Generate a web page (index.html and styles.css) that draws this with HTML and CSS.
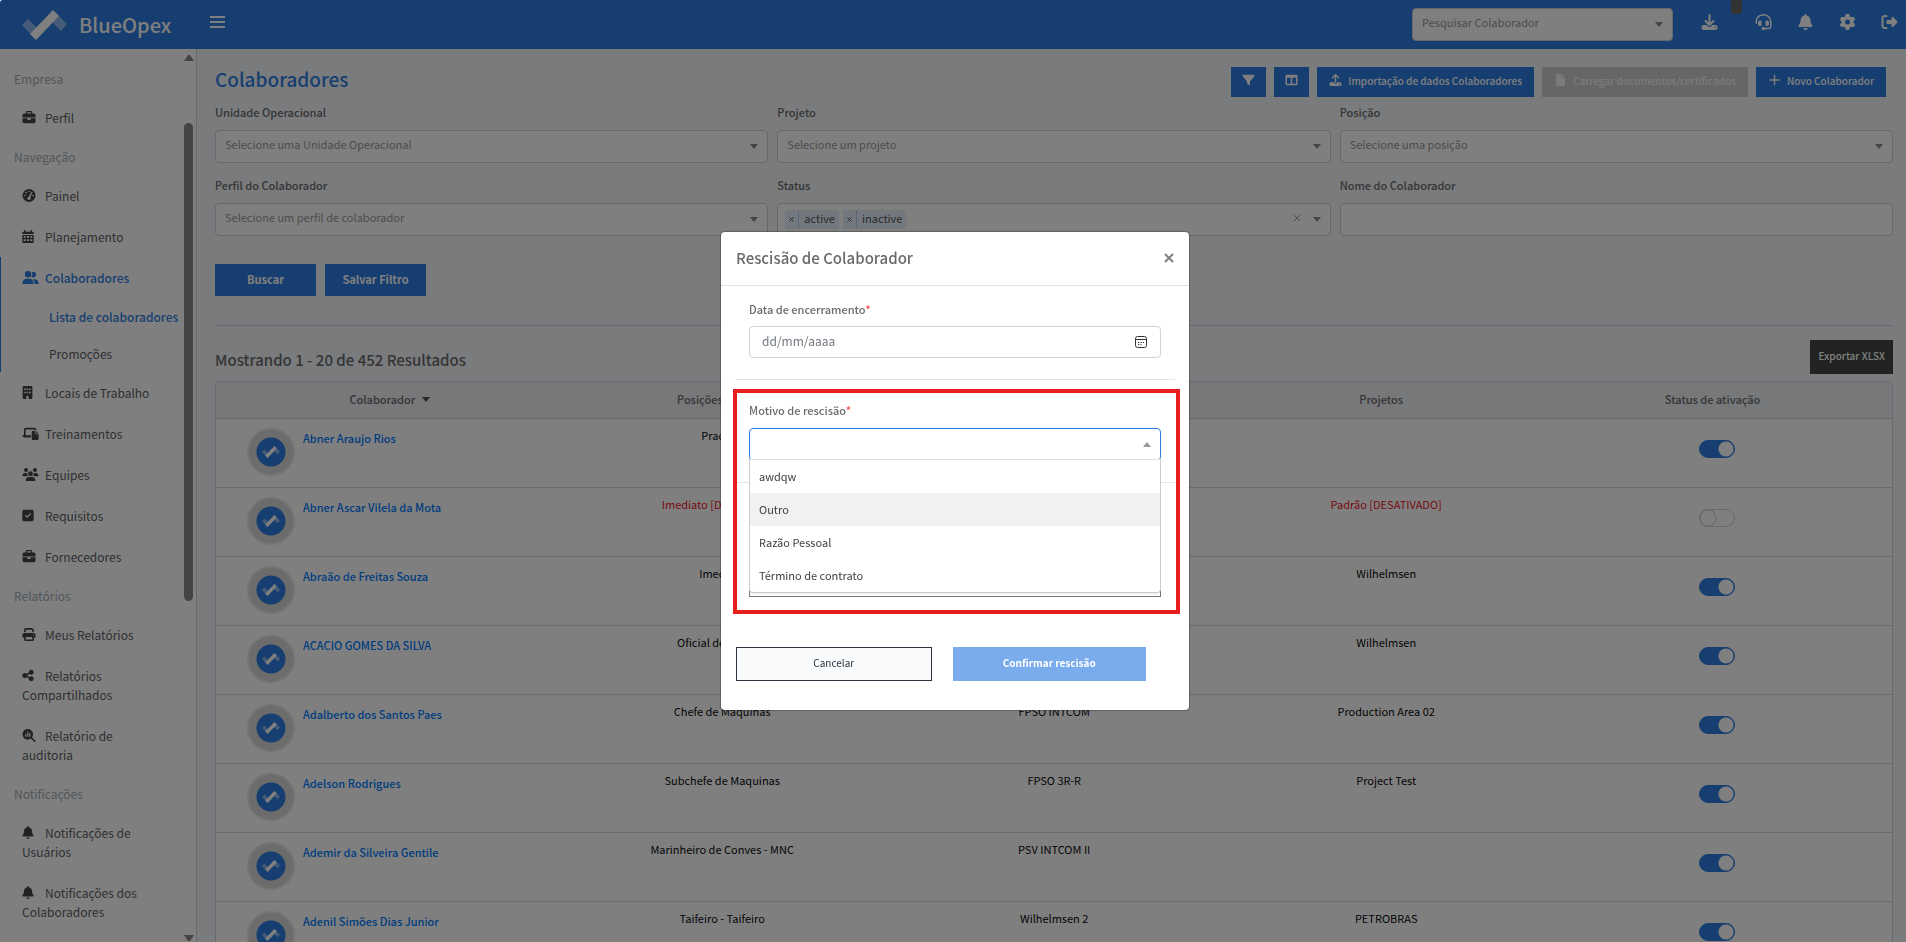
FILE: index.html
```html
<!DOCTYPE html>
<html lang="pt-BR">
<head>
    <meta charset="UTF-8">
    <meta name="viewport" content="width=device-width, initial-scale=1.0">
    <title>BlueOpex - Colaboradores</title>
    <link rel="stylesheet" href="styles.css">
</head>
<body>
    <svg class="sprite" aria-hidden="true">
        <symbol id="i-bell" viewBox="0 0 448 512"><path d="M224 0c-17.7 0-32 14.3-32 32V51.2C119 66 64 130.6 64 208v18.8c0 47-17.3 92.4-48.5 127.6l-7.4 8.3c-8.4 9.4-10.4 22.9-5.3 34.4S19.4 416 32 416H416c12.6 0 24-7.4 29.2-18.9s3.1-25-5.3-34.4l-7.4-8.3C401.3 319.2 384 273.9 384 226.8V208c0-77.4-55-142-128-156.8V32c0-17.7-14.3-32-32-32zm45.3 493.3c12-12 18.7-28.3 18.7-45.3H160c0 17 6.7 33.3 18.7 45.3s28.3 18.7 45.3 18.7s33.3-6.7 45.3-18.7z"/></symbol>
        <symbol id="i-share" viewBox="0 0 448 512"><path d="M352 224c53 0 96-43 96-96s-43-96-96-96s-96 43-96 96c0 4 .2 8 .7 11.9l-94.1 47C145.4 170.2 121.9 160 96 160c-53 0-96 43-96 96s43 96 96 96c25.9 0 49.4-10.2 66.6-26.9l94.1 47c-.5 3.9-.7 7.8-.7 11.9c0 53 43 96 96 96s96-43 96-96s-43-96-96-96c-25.9 0-49.4 10.2-66.6 26.9l-94.1-47c.5-3.9 .7-7.8 .7-11.9s-.2-8-.7-11.9l94.1-47C302.6 213.8 326.1 224 352 224z"/></symbol>
        <symbol id="i-briefcase" viewBox="0 0 512 512"><path d="M184 48H328c4.4 0 8 3.6 8 8V96H176V56c0-4.4 3.6-8 8-8zm-56 8V96H64C28.7 96 0 124.7 0 160v96H192 320 512V160c0-35.3-28.7-64-64-64H384V56c0-30.9-25.1-56-56-56H184c-30.9 0-56 25.1-56 56zM512 288H320v32c0 17.7-14.3 32-32 32H224c-17.7 0-32-14.3-32-32V288H0V416c0 35.3 28.7 64 64 64H448c35.3 0 64-28.7 64-64V288z"/></symbol>
        <symbol id="i-users" viewBox="0 0 640 512"><path d="M96 128a128 128 0 1 1 256 0A128 128 0 1 1 96 128zM0 482.3C0 383.8 79.8 304 178.3 304h91.4C368.2 304 448 383.8 448 482.3c0 16.4-13.3 29.7-29.7 29.7H29.7C13.3 512 0 498.7 0 482.3zM609.3 512H471.4c5.4-9.4 8.6-20.3 8.6-32v-8c0-60.7-27.1-115.2-69.8-151.8c2.4-.1 4.7-.2 7.1-.2h61.4C567.8 320 640 392.2 640 481.3c0 17-13.8 30.7-30.7 30.7zM432 256c-31 0-59-12.6-79.3-32.9C372.4 196.5 384 163.6 384 128c0-26.8-6.6-52.1-18.3-74.3C384.3 40.1 407.2 32 432 32c61.9 0 112 50.1 112 112s-50.1 112-112 112z"/></symbol>
        <symbol id="i-check" viewBox="0 0 448 512"><path d="M64 32C28.7 32 0 60.7 0 96V416c0 35.3 28.7 64 64 64H384c35.3 0 64-28.7 64-64V96c0-35.3-28.7-64-64-64H64zM337 209L209 337c-9.4 9.4-24.6 9.4-33.9 0l-64-64c-9.4-9.4-9.4-24.6 0-33.9s24.6-9.4 33.9 0l47 47L303 175c9.4-9.4 24.6-9.4 33.9 0s9.4 24.6 0 33.9z"/></symbol>
        <symbol id="i-print" viewBox="0 0 512 512"><path d="M128 0C92.7 0 64 28.7 64 64v96h64V64H354.7L384 93.3V160h64V93.3c0-17-6.7-33.3-18.7-45.3L400 18.7C388 6.7 371.7 0 354.7 0H128zM384 352v32 64H128V384 368 352H384zm64 32h32c17.7 0 32-14.3 32-32V256c0-35.3-28.7-64-64-64H64c-35.3 0-64 28.7-64 64v96c0 17.7 14.3 32 32 32H64v64c0 35.3 28.7 64 64 64H384c35.3 0 64-28.7 64-64V384zM432 248a24 24 0 1 1 0 48 24 24 0 1 1 0-48z"/></symbol>
        <symbol id="i-download" viewBox="0 0 512 512"><path d="M288 32c0-17.7-14.3-32-32-32s-32 14.3-32 32V274.7l-73.4-73.4c-12.5-12.5-32.8-12.5-45.3 0s-12.5 32.8 0 45.3l128 128c12.5 12.5 32.8 12.5 45.3 0l128-128c12.5-12.5 12.5-32.8 0-45.3s-32.8-12.5-45.3 0L288 274.7V32zM64 352c-35.3 0-64 28.7-64 64v32c0 35.3 28.7 64 64 64H448c35.3 0 64-28.7 64-64V416c0-35.3-28.7-64-64-64H346.5l-45.3 45.3c-25 25-65.5 25-90.5 0L165.5 352H64zm368 56a24 24 0 1 1 0 48 24 24 0 1 1 0-48z"/></symbol>
        <symbol id="i-upload" viewBox="0 0 512 512"><path d="M288 109.3V352c0 17.7-14.3 32-32 32s-32-14.3-32-32V109.3l-73.4 73.4c-12.5 12.5-32.8 12.5-45.3 0s-12.5-32.8 0-45.3l128-128c12.5-12.5 32.8-12.5 45.3 0l128 128c12.5 12.5 12.5 32.8 0 45.3s-32.8 12.5-45.3 0L288 109.3zM64 352H192c0 35.3 28.7 64 64 64s64-28.7 64-64H448c35.3 0 64 28.7 64 64v32c0 35.3-28.7 64-64 64H64c-35.3 0-64-28.7-64-64V416c0-35.3 28.7-64 64-64zM432 456a24 24 0 1 0 0-48 24 24 0 1 0 0 48z"/></symbol>
        <symbol id="i-gear" viewBox="0 0 512 512"><path d="M495.9 166.6c3.2 8.7 .5 18.4-6.4 24.6l-43.3 39.4c1.1 8.3 1.7 16.8 1.7 25.4s-.6 17.1-1.7 25.4l43.3 39.4c6.9 6.2 9.6 15.9 6.4 24.6c-4.4 11.9-9.7 23.3-15.8 34.3l-4.7 8.1c-6.6 11-14 21.4-22.1 31.2c-5.9 7.2-15.7 9.6-24.5 6.8l-55.7-17.7c-13.4 10.3-28.2 18.9-44 25.4l-12.5 57.1c-2 9.1-9 16.3-18.2 17.8c-13.8 2.3-28 3.5-42.5 3.5s-28.7-1.2-42.5-3.5c-9.2-1.5-16.2-8.7-18.2-17.8l-12.5-57.1c-15.8-6.5-30.6-15.1-44-25.4L83.1 425.9c-8.8 2.8-18.6 .3-24.5-6.8c-8.1-9.8-15.5-20.2-22.1-31.2l-4.7-8.1c-6.1-11-11.4-22.4-15.8-34.3c-3.2-8.7-.5-18.4 6.4-24.6l43.3-39.4C64.6 273.1 64 264.6 64 256s.6-17.1 1.7-25.4L22.4 191.2c-6.9-6.2-9.6-15.9-6.4-24.6c4.4-11.9 9.7-23.3 15.8-34.3l4.7-8.1c6.6-11 14-21.4 22.1-31.2c5.9-7.2 15.7-9.6 24.5-6.8l55.7 17.7c13.4-10.3 28.2-18.9 44-25.4l12.5-57.1c2-9.1 9-16.3 18.2-17.8C227.3 1.2 241.5 0 256 0s28.7 1.2 42.5 3.5c9.2 1.5 16.2 8.7 18.2 17.8l12.5 57.1c15.8 6.5 30.6 15.1 44 25.4l55.7-17.7c8.8-2.8 18.6-.3 24.5 6.8c8.1 9.8 15.5 20.2 22.1 31.2l4.7 8.1c6.1 11 11.4 22.4 15.8 34.3zM256 336a80 80 0 1 0 0-160 80 80 0 1 0 0 160z"/></symbol>
        <symbol id="i-headset" viewBox="0 0 512 512"><path d="M256 48C141.1 48 48 141.1 48 256v40c0 13.3-10.7 24-24 24s-24-10.7-24-24V256C0 114.6 114.6 0 256 0S512 114.6 512 256V400.1c0 48.6-39.4 88-88.1 88L313.6 488c-8.3 14.3-23.8 24-41.6 24H240c-26.5 0-48-21.5-48-48s21.5-48 48-48h32c17.8 0 33.3 9.7 41.6 24l110.4 .1c22.1 0 40-17.9 40-40V256c0-114.9-93.1-208-208-208zM144 208h16c17.7 0 32 14.3 32 32V352c0 17.7-14.3 32-32 32H144c-35.3 0-64-28.7-64-64V272c0-35.3 28.7-64 64-64zm224 0c35.3 0 64 28.7 64 64v48c0 35.3-28.7 64-64 64H352c-17.7 0-32-14.3-32-32V240c0-17.7 14.3-32 32-32h16z"/></symbol>
        <symbol id="i-logout" viewBox="0 0 512 512"><path d="M377.9 105.9L500.7 228.7c7.2 7.2 11.3 17.1 11.3 27.3s-4.1 20.1-11.3 27.3L377.9 406.1c-6.4 6.4-15 9.9-24 9.9c-18.7 0-33.9-15.2-33.9-33.9l0-62.1-128 0c-17.7 0-32-14.3-32-32l0-64c0-17.7 14.3-32 32-32l128 0 0-62.1c0-18.7 15.2-33.9 33.9-33.9c9 0 17.6 3.6 24 9.9zM160 96L96 96c-17.7 0-32 14.3-32 32l0 256c0 17.7 14.3 32 32 32l64 0c17.7 0 32 14.3 32 32s-14.3 32-32 32l-64 0c-53 0-96-43-96-96L0 128C0 75 43 32 96 32l64 0c17.7 0 32 14.3 32 32s-14.3 32-32 32z"/></symbol>
        <symbol id="i-filter" viewBox="0 0 512 512"><path d="M3.9 54.9C10.5 40.9 24.5 32 40 32H472c15.5 0 29.5 8.9 36.1 22.9s4.6 30.5-5.2 42.5L320 320.9V448c0 12.1-6.8 23.2-17.7 28.6s-23.8 4.3-33.5-3l-64-48c-8.1-6-12.8-15.5-12.8-25.6V320.9L9 97.3C-.7 85.4-2.8 68.8 3.9 54.9z"/></symbol>
        <symbol id="i-columns" viewBox="0 0 512 512"><path d="M0 96C0 60.7 28.7 32 64 32H448c35.3 0 64 28.7 64 64V416c0 35.3-28.7 64-64 64H64c-35.3 0-64-28.7-64-64V96zm64 64V416H224V160H64zm384 0H288V416H448V160z"/></symbol>
        <symbol id="i-file" viewBox="0 0 384 512"><path d="M0 64C0 28.7 28.7 0 64 0H224V128c0 17.7 14.3 32 32 32H384V448c0 35.3-28.7 64-64 64H64c-35.3 0-64-28.7-64-64V64zm384 64H256V0L384 128z"/></symbol>
        <symbol id="i-plus" viewBox="0 0 448 512"><path d="M224 64V448M32 256H416" fill="none" stroke="currentColor" stroke-width="60" stroke-linecap="round"/></symbol>
        <symbol id="i-building" viewBox="0 0 384 512"><path fill-rule="evenodd" d="M48 0H336a48 48 0 0 1 48 48V464a48 48 0 0 1-48 48H240V432a48 48 0 0 0-96 0v80H48a48 48 0 0 1-48-48V48A48 48 0 0 1 48 0zM64 96v64h64V96zm96 0v64h64V96zm96 0v64h64V96zM64 224v64h64V224zm96 0v64h64V224zm96 0v64h64V224z"/></symbol>
        <symbol id="i-calendar" viewBox="0 0 448 512"><path fill-rule="evenodd" d="M96 0a32 32 0 0 1 32 32V64H320V32a32 32 0 0 1 64 0V64h16a48 48 0 0 1 48 48v48H0V112A48 48 0 0 1 48 64H64V32A32 32 0 0 1 96 0zM0 192H448V464a48 48 0 0 1-48 48H48a48 48 0 0 1-48-48zM56 240v64h80V240zm128 0v64h80V240zm128 0v64h80V240zM56 368v64h80V368zm128 0v64h80V368zm128 0v64h80V368z"/></symbol>
        <symbol id="i-gauge" viewBox="0 0 512 512"><path fill-rule="evenodd" d="M0 256a256 256 0 1 1 512 0A256 256 0 1 1 0 256zM224 96a32 32 0 1 0 64 0a32 32 0 1 0-64 0zM112 144a32 32 0 1 0 64 0a32 32 0 1 0-64 0zM64 256a32 32 0 1 0 64 0a32 32 0 1 0-64 0zM384 256a32 32 0 1 0 64 0a32 32 0 1 0-64 0zM350 118L248 304a64 64 0 1 0 58 24L392 138a24 24 0 0 0-42-20z"/></symbol>
        <symbol id="i-laptop" viewBox="0 0 640 512"><path d="M128 32A64 64 0 0 0 64 96V320H16a16 16 0 0 0-16 16a80 80 0 0 0 80 80H336V320H128V96H480v32h64V96a64 64 0 0 0-64-64zM416 160a48 48 0 0 0-48 48V464a48 48 0 0 0 48 48H592a48 48 0 0 0 48-48V288H528a16 16 0 0 1-16-16V160zM544 160v96h96z"/></symbol>
        <symbol id="i-team" viewBox="0 0 640 512"><path d="M64 80a80 80 0 1 1 160 0A80 80 0 1 1 64 80zM416 80a80 80 0 1 1 160 0A80 80 0 1 1 416 80zM0 299c0-59 48-107 107-107h42c16 0 31 3 45 10a130 130 0 0 0 41 118H21a21 21 0 0 1-21-21zM405 320a130 130 0 0 0 41-118c14-7 29-10 45-10h42c59 0 107 48 107 107a21 21 0 0 1-21 21zM224 224a96 96 0 1 1 192 0A96 96 0 1 1 224 224zM128 485c0-73 60-133 133-133h118c73 0 133 60 133 133a27 27 0 0 1-27 27H155a27 27 0 0 1-27-27z"/></symbol>
        <symbol id="i-search-chart" viewBox="0 0 512 512"><path fill-rule="evenodd" d="M416 208c0 46-15 88-40 123l127 126a32 32 0 0 1-46 46L331 376A208 208 0 1 1 416 208zM104 216v72a24 24 0 0 0 48 0V216a24 24 0 0 0-48 0zM184 120V288a24 24 0 0 0 48 0V120a24 24 0 0 0-48 0zM264 184V288a24 24 0 0 0 48 0V184a24 24 0 0 0-48 0z"/></symbol>
        <symbol id="i-mark" viewBox="0 0 45 30"><path d="M0 15l6-6 13 13-6 7z" opacity=".45"/><path d="M31 0l14 14-6 7-13-13z" opacity=".45"/><path d="M8 24L31 0l6 6-23 24z"/></symbol>
        <symbol id="i-x" viewBox="0 0 10 10"><path d="M1 1l8 8M9 1l-8 8" fill="none" stroke="currentColor"/></symbol>
        <symbol id="i-date" viewBox="0 0 12 12"><path d="M2.500.5h7a2 2 0 0 1 2 2v7a2 2 0 0 1-2 2h-7a2 2 0 0 1-2-2v-7a2 2 0 0 1 2-2zM.5 3.500h11M3 6.500h1.200M5.400 6.500h1.200M7.800 6.500h1.200M3 8.700h1.200M5.400 8.700h1.200" fill="none" stroke="currentColor" stroke-width="1"/></symbol>
    </svg>

    <div class="app">
        <header class="topbar">
            <a class="brand" href="#"><svg class="brand-mark"><use href="#i-mark"/></svg>BlueOpex</a>
            <button class="menu-toggle" aria-label="Menu"><span></span><span></span><span></span></button>
            <select class="control top-search" aria-label="Pesquisar Colaborador"><option>Pesquisar Colaborador</option></select>
            <nav class="top-icons">
                <a href="#" class="has-badge" aria-label="Downloads"><svg><use href="#i-download"/></svg><span class="badge"></span></a>
                <a href="#" aria-label="Suporte"><svg><use href="#i-headset"/></svg></a>
                <a href="#" aria-label="Notificações"><svg><use href="#i-bell"/></svg></a>
                <a href="#" aria-label="Configurações"><svg><use href="#i-gear"/></svg></a>
                <a href="#" aria-label="Sair"><svg><use href="#i-logout"/></svg></a>
            </nav>
        </header>

        <div class="layout">
            <aside class="sidebar">
                <nav class="side-nav">
                    <h6>Empresa</h6>
                    <a href="#"><svg><use href="#i-briefcase"/></svg>Perfil</a>
                    <h6>Navegação</h6>
                    <a href="#"><svg><use href="#i-gauge"/></svg>Painel</a>
                    <a href="#"><svg class="narrow"><use href="#i-calendar"/></svg>Planejamento</a>
                    <div class="side-group">
                        <a href="#" class="active"><svg class="wide"><use href="#i-users"/></svg>Colaboradores</a>
                        <a href="#" class="sub active">Lista de colaboradores</a>
                        <a href="#" class="sub">Promoções</a>
                    </div>
                    <a href="#"><svg class="slim"><use href="#i-building"/></svg>Locais de Trabalho</a>
                    <a href="#"><svg class="wide"><use href="#i-laptop"/></svg>Treinamentos</a>
                    <a href="#"><svg class="wide"><use href="#i-team"/></svg>Equipes</a>
                    <a href="#"><svg class="narrow"><use href="#i-check"/></svg>Requisitos</a>
                    <a href="#"><svg><use href="#i-briefcase"/></svg>Fornecedores</a>
                    <h6>Relatórios</h6>
                    <a href="#"><svg><use href="#i-print"/></svg>Meus Relatórios</a>
                    <a href="#"><svg class="narrow"><use href="#i-share"/></svg>Relatórios Compartilhados</a>
                    <a href="#"><svg><use href="#i-search-chart"/></svg>Relatório de auditoria</a>
                    <h6>Notificações</h6>
                    <a href="#"><svg class="narrow"><use href="#i-bell"/></svg>Notificações de Usuários</a>
                    <a href="#"><svg class="narrow"><use href="#i-bell"/></svg>Notificações dos Colaboradores</a>
                </nav>
                <div class="scrollbar" aria-hidden="true">
                    <span class="arrow-up"></span>
                    <span class="thumb"></span>
                    <span class="arrow-down"></span>
                </div>
            </aside>

            <main class="content">
                <div class="page-head">
                    <h1>Colaboradores</h1>
                    <div class="actions">
                        <button class="btn btn-icon" aria-label="Filtrar"><svg><use href="#i-filter"/></svg></button>
                        <button class="btn btn-icon" aria-label="Colunas"><svg><use href="#i-columns"/></svg></button>
                        <button class="btn"><svg><use href="#i-upload"/></svg>Importação de dados Colaboradores</button>
                        <button class="btn btn-disabled" disabled><svg><use href="#i-file"/></svg>Carregar documentos/certificados</button>
                        <button class="btn"><svg><use href="#i-plus"/></svg>Novo Colaborador</button>
                    </div>
                </div>

                <form class="filters">
                    <div class="field">
                        <label for="unidade">Unidade Operacional</label>
                        <select id="unidade" class="control"><option>Selecione uma Unidade Operacional</option></select>
                    </div>
                    <div class="field">
                        <label for="projeto">Projeto</label>
                        <select id="projeto" class="control"><option>Selecione um projeto</option></select>
                    </div>
                    <div class="field">
                        <label for="posicao">Posição</label>
                        <select id="posicao" class="control"><option>Selecione uma posição</option></select>
                    </div>
                    <div class="field">
                        <label for="perfil">Perfil do Colaborador</label>
                        <select id="perfil" class="control"><option>Selecione um perfil de colaborador</option></select>
                    </div>
                    <div class="field">
                        <label for="status">Status</label>
                        <div class="control tags">
                            <span class="tag"><button type="button" aria-label="Remover active"><svg><use href="#i-x"/></svg></button>active</span>
                            <span class="tag"><button type="button" aria-label="Remover inactive"><svg><use href="#i-x"/></svg></button>inactive</span>
                            <input id="status" type="text">
                            <button type="button" class="clear" aria-label="Limpar"><svg><use href="#i-x"/></svg></button>
                        </div>
                    </div>
                    <div class="field">
                        <label for="nome">Nome do Colaborador</label>
                        <input id="nome" type="text" class="control plain">
                    </div>
                </form>

                <div class="filter-buttons">
                    <button class="btn btn-lg">Buscar</button>
                    <button class="btn btn-lg">Salvar Filtro</button>
                </div>
                <hr>

                <div class="results-head">
                    <h2>Mostrando 1 - 20 de 452 Resultados</h2>
                    <button class="btn btn-dark">Exportar XLSX</button>
                </div>

                <div class="table-box">
                    <table class="results">
                        <thead>
                            <tr>
                                <th>Colaborador <span class="sort"></span></th>
                                <th>Posições atuais</th>
                                <th>Locais de Trabalho</th>
                                <th>Projetos</th>
                                <th>Status de ativação</th>
                            </tr>
                        </thead>
                        <tbody>
                            <tr>
                                <td><div class="person"><span class="avatar"><svg><use href="#i-mark"/></svg></span><a href="#">Abner Araujo Rios</a></div></td>
                                <td>Practico</td>
                                <td></td>
                                <td></td>
                                <td><input type="checkbox" class="switch" aria-label="Ativo" checked></td>
                            </tr>
                            <tr class="disabled">
                                <td><div class="person"><span class="avatar"><svg><use href="#i-mark"/></svg></span><a href="#">Abner Ascar Vilela da Mota</a></div></td>
                                <td>Imediato [DESATIVADO]</td>
                                <td></td>
                                <td>Padrão [DESATIVADO]</td>
                                <td><input type="checkbox" class="switch" aria-label="Ativo"></td>
                            </tr>
                            <tr>
                                <td><div class="person"><span class="avatar"><svg><use href="#i-mark"/></svg></span><a href="#">Abraão de Freitas Souza</a></div></td>
                                <td>Imediato</td>
                                <td></td>
                                <td>Wilhelmsen</td>
                                <td><input type="checkbox" class="switch" aria-label="Ativo" checked></td>
                            </tr>
                            <tr>
                                <td><div class="person"><span class="avatar"><svg><use href="#i-mark"/></svg></span><a href="#">ACACIO GOMES DA SILVA</a></div></td>
                                <td>Oficial de Nautica</td>
                                <td></td>
                                <td>Wilhelmsen</td>
                                <td><input type="checkbox" class="switch" aria-label="Ativo" checked></td>
                            </tr>
                            <tr>
                                <td><div class="person"><span class="avatar"><svg><use href="#i-mark"/></svg></span><a href="#">Adalberto dos Santos Paes</a></div></td>
                                <td>Chefe de Maquinas</td>
                                <td>FPSO INTCOM</td>
                                <td>Production Area 02</td>
                                <td><input type="checkbox" class="switch" aria-label="Ativo" checked></td>
                            </tr>
                            <tr>
                                <td><div class="person"><span class="avatar"><svg><use href="#i-mark"/></svg></span><a href="#">Adelson Rodrigues</a></div></td>
                                <td>Subchefe de Maquinas</td>
                                <td>FPSO 3R-R</td>
                                <td>Project Test</td>
                                <td><input type="checkbox" class="switch" aria-label="Ativo" checked></td>
                            </tr>
                            <tr>
                                <td><div class="person"><span class="avatar"><svg><use href="#i-mark"/></svg></span><a href="#">Ademir da Silveira Gentile</a></div></td>
                                <td>Marinheiro de Conves - MNC</td>
                                <td>PSV INTCOM II</td>
                                <td></td>
                                <td><input type="checkbox" class="switch" aria-label="Ativo" checked></td>
                            </tr>
                            <tr>
                                <td><div class="person"><span class="avatar"><svg><use href="#i-mark"/></svg></span><a href="#">Adenil Simões Dias Junior</a></div></td>
                                <td>Taifeiro - Taifeiro</td>
                                <td>Wilhelmsen 2</td>
                                <td>PETROBRAS</td>
                                <td><input type="checkbox" class="switch" aria-label="Ativo" checked></td>
                            </tr>
                        </tbody>
                    </table>
                </div>
            </main>
        </div>
    </div>

    <div class="backdrop">
        <div class="modal" role="dialog" aria-labelledby="modal-title">
            <div class="modal-header">
                <h3 id="modal-title">Rescisão de Colaborador</h3>
                <button class="close" aria-label="Fechar"><svg><use href="#i-x"/></svg></button>
            </div>
            <div class="modal-body">
                <div class="modal-field">
                    <label for="data">Data de encerramento<span class="req">*</span></label>
                    <div class="date-box">
                        <input id="data" type="text" placeholder="dd/mm/aaaa">
                        <button aria-label="Abrir calendário"><svg><use href="#i-date"/></svg></button>
                    </div>
                </div>
                <div class="modal-field">
                    <label for="motivo">Motivo de rescisão<span class="req">*</span></label>
                    <div class="dropdown">
                        <select id="motivo" class="control open"><option></option></select>
                        <ul class="options" role="listbox">
                            <li role="option">awdqw</li>
                            <li role="option" class="hover">Outro</li>
                            <li role="option">Razão Pessoal</li>
                            <li role="option">Término de contrato</li>
                        </ul>
                    </div>
                </div>
                <div class="modal-field">
                    <textarea aria-label="Comentários"></textarea>
                </div>
                <div class="highlight"></div>
            </div>
            <div class="modal-footer">
                <button class="btn btn-cancel">Cancelar</button>
                <button class="btn btn-confirm" disabled>Confirmar rescisão</button>
            </div>
        </div>
    </div>
</body>
</html>
```
FILE: styles.css
```css
* {
    box-sizing: border-box;
}
body {
    margin: 0;
    font-family: "Noto Sans CJK JP", "Noto Sans", sans-serif;
    font-size: 11px;
    line-height: 20px;
    color: #6a6a6a;
    background-color: #fff;
}
h1, h2, h3, h6 {
    margin: 0;
    font-weight: 500;
}
a {
    text-decoration: none;
}
button, input, select, textarea {
    font: inherit;
    margin: 0;
}
svg {
    fill: currentColor;
}
.sprite {
    display: none;
}
.app {
    height: 100vh;
    display: flex;
    flex-direction: column;
    overflow: hidden;
}

/* top bar */
.topbar {
    flex: none;
    height: 49px;
    display: flex;
    align-items: center;
    padding: 0 8px 0 22px;
    background-color: #2f7de1;
    color: #fff;
    border-top-left-radius: 3px;
}
.brand {
    display: flex;
    align-items: center;
    gap: 12px;
    width: 188px;
    font-size: 20px;
    font-weight: 500;
    color: #fff;
}
.brand-mark {
    width: 45px;
    height: 30px;
}
.menu-toggle {
    display: flex;
    flex-direction: column;
    gap: 3px;
    width: 15px;
    margin-bottom: 5px;
    padding: 0;
    border: 0;
    background: none;
}
.menu-toggle span {
    height: 2px;
    background-color: #fff;
}
.control {
    width: 100%;
    height: 33px;
    padding: 0 28px 5px 9px;
    border: 1px solid #ccd0d6;
    border-radius: 4px;
    color: #999;
    appearance: none;
    background: #fff url("data:image/svg+xml,%3Csvg xmlns='http://www.w3.org/2000/svg' width='8' height='5'%3E%3Cpath d='M0 0h8L4 5z' fill='%23888'/%3E%3C/svg%3E") no-repeat right 9px center;
}
.control.plain {
    background-image: none;
}
.top-search {
    width: 261px;
    margin: 0 28px 1px auto;
}
.top-icons {
    display: flex;
    align-items: center;
    gap: 25px;
    margin-bottom: 5px;
}
.top-icons a {
    display: flex;
    color: #fff;
}
.top-icons svg {
    width: 17px;
    height: 16px;
}
.has-badge {
    position: relative;
    margin-right: 12px;
}
.badge {
    position: absolute;
    left: 30px;
    top: -14px;
    width: 11px;
    height: 14px;
    border-radius: 0 0 2px 2px;
    background-color: #666;
}

/* sidebar */
.layout {
    flex: 1;
    display: flex;
    min-height: 0;
}
.sidebar {
    flex: none;
    width: 197px;
    display: flex;
    overflow: hidden;
    background-color: #fff;
    border-right: 1px solid #d0d4da;
}
.side-nav {
    flex: 1;
    padding-top: 11px;
    font-size: 12px;
    line-height: 19px;
}
.side-nav h6 {
    padding: 9px 14px;
    font-size: 12px;
    font-weight: 400;
    color: #a4adb4;
}
.side-nav a {
    display: block;
    padding: 11px 24px 11px 22px;
    color: #5c6064;
}
.side-nav svg {
    width: 14px;
    height: 13px;
    margin-right: 9px;
    vertical-align: -1px;
    color: #404448;
}
.side-nav svg.narrow {
    width: 12px;
    margin-right: 11px;
}
.side-nav svg.slim {
    width: 11px;
    margin-right: 12px;
}
.side-nav svg.wide {
    width: 17px;
    margin-right: 6px;
}
.side-nav .active,
.side-nav .active svg {
    color: #2f7de1;
    font-weight: 500;
}
.side-group {
    border-left: 1px solid #2f7de1;
}
.side-group a {
    padding-left: 21px;
}
.side-group .sub {
    padding: 9px 0 9px 48px;
    white-space: nowrap;
}
.scrollbar {
    flex: none;
    width: 12px;
    display: flex;
    flex-direction: column;
    padding: 6px 2px 1px 0;
}
.scrollbar .arrow-up {
    border: 4px solid transparent;
    border-top: 0;
    border-bottom: 6px solid #888;
}
.scrollbar .arrow-down {
    margin-top: auto;
    border: 4px solid transparent;
    border-bottom: 0;
    border-top: 6px solid #888;
}
.scrollbar .thumb {
    width: 9px;
    height: 54%;
    margin-top: 62px;
    border-radius: 5px;
    background-color: #888;
}

/* main content */
.content {
    flex: 1;
    min-width: 0;
    padding: 14px 13px 0 18px;
    background-color: #f4f6fa;
}
.page-head {
    display: flex;
    justify-content: space-between;
    padding: 0 7px 6px 0;
}
.page-head h1 {
    font-size: 19px;
    line-height: 32px;
    color: #2f7de1;
}
.actions {
    display: flex;
    gap: 8px;
    padding-top: 4px;
}
.btn {
    height: 30px;
    padding: 0 12px 2px;
    border: 0;
    background-color: #2f7de1;
    color: #fff;
    font-size: 10px;
    font-weight: 500;
    white-space: nowrap;
}
.btn svg {
    width: 13px;
    height: 12px;
    margin-right: 6px;
    vertical-align: -1px;
}
.btn-icon {
    padding: 0 11px 2px;
}
.btn-icon svg {
    margin-right: 0;
}
.btn-disabled {
    background-color: #ccc;
    color: #f6f6f6;
}
.btn-lg {
    width: 101px;
    height: 32px;
    font-size: 11px;
    font-weight: 700;
}
.btn-dark {
    height: 34px;
    padding: 0 8px 2px;
    background-color: #454947;
}
.filters {
    display: grid;
    grid-template-columns: repeat(3, 1fr);
    gap: 13px 9px;
}
.field label {
    display: block;
    margin-bottom: 9px;
    line-height: 18px;
    font-weight: 500;
}
.tags {
    display: flex;
    align-items: center;
    gap: 4px;
    padding: 0 29px 0 7px;
}
.tag {
    display: flex;
    height: 19px;
    padding-right: 4px;
    border-radius: 2px;
    background-color: #e4f0fb;
    line-height: 17px;
    color: #555;
}
.tag button {
    width: 14px;
    margin-right: 5px;
    padding: 0;
    border: 0;
    border-right: 1px solid #b3d1ef;
    background: none;
    color: #555;
}
.tag svg {
    display: block;
    width: 5px;
    height: 5px;
    margin: 0 auto;
    stroke-width: 2;
}
.tags input {
    flex: 1;
    min-width: 0;
    border: 0;
    background: none;
}
.clear {
    display: flex;
    padding: 0 0 3px;
    border: 0;
    background: none;
    color: #888;
}
.clear svg {
    width: 8px;
    height: 8px;
}
.filter-buttons {
    display: flex;
    gap: 9px;
    margin-top: 28px;
}
.content hr {
    height: 1px;
    margin: 29px 0 14px;
    border: 0;
    background-color: #d0d4da;
}
.results-head {
    display: flex;
    justify-content: space-between;
    align-items: flex-start;
    margin-bottom: 7px;
}
.results-head h2 {
    padding-top: 10px;
    font-size: 15px;
}
.table-box {
    border: 1px solid #d0d4da;
    border-radius: 4px 4px 0 0;
    overflow: hidden;
}
.results {
    width: 100%;
    table-layout: fixed;
    border-collapse: collapse;
    background-color: #fff;
}
.results th {
    width: 332px;
    height: 36px;
    padding: 0 0 2px;
    border-bottom: 1px solid #d0d4da;
    background-color: #eef0f4;
    font-weight: 500;
    text-align: center;
}
.results th:first-child {
    width: 20%;
    padding-left: 12px;
}
.results th:last-child {
    width: auto;
    padding-right: 14px;
}
.results td {
    height: 69px;
    padding: 6px 0 0 10px;
    border-bottom: 1px solid #d8dadd;
    color: #0a0a0a;
    text-align: center;
    vertical-align: top;
}
.results td:last-child {
    padding: 21px 15px 0 10px;
}
.results .disabled td {
    color: #f01428;
}
.sort {
    display: inline-block;
    margin-left: 4px;
    border: 4px solid transparent;
    border-top: 5px solid #555;
    border-bottom: 0;
    vertical-align: 2px;
}
.person {
    display: flex;
    gap: 8px;
    padding: 3px 0 0 21px;
}
.person a {
    color: #007bff;
    font-weight: 500;
}
.avatar {
    width: 48px;
    height: 48px;
    border: 2px solid #e6e6e6;
    border-radius: 50%;
    background: radial-gradient(circle, #2f7de1 14px, #d8d8d8 15px);
    display: flex;
    align-items: center;
    justify-content: center;
    color: #fff;
}
.avatar svg {
    width: 18px;
    height: 12px;
}
.switch {
    appearance: none;
    width: 36px;
    height: 18px;
    border-radius: 9px;
    background: radial-gradient(circle at 8px 8px, #fff 7px, #d0d0d0 8px, #fff 9px);
    border: 1px solid #d0d0d0;
}
.switch:checked {
    border-color: #2f7de1;
    background: radial-gradient(circle at 26px 8px, #fff 7px, #2f7de1 8px);
}

/* modal */
.backdrop {
    position: fixed;
    inset: 0;
    display: flex;
    justify-content: center;
    align-items: flex-start;
    padding-top: 232px;
    padding-left: 4px;
    border-top-left-radius: 3px;
    background-color: rgba(0, 0, 0, 0.5);
}
.modal {
    width: 468px;
    border-radius: 4px;
    background-color: #fff;
    box-shadow: 0 0 1px 1px rgba(0, 0, 0, 0.25);
}
.modal-header {
    display: flex;
    justify-content: space-between;
    align-items: center;
    height: 54px;
    padding: 0 15px 1px;
    border-bottom: 1px solid #dee2e6;
}
.modal-header h3 {
    font-size: 15px;
}
.close {
    display: flex;
    padding: 0;
    border: 0;
    background: none;
    color: #808080;
}
.close svg {
    width: 10px;
    height: 10px;
    stroke-width: 2;
}
.modal-body {
    position: relative;
    padding: 0 14px;
}
.modal-field {
    padding: 14px 14px 21px;
    border-bottom: 1px solid #e2e4ea;
}
.modal-field + .modal-field {
    padding-top: 21px;
}
.modal-field:nth-child(3) {
    border-bottom: 0;
}
.modal-field label {
    display: block;
    margin-bottom: 8px;
    line-height: 18px;
    font-weight: 500;
}
.req {
    color: #f44;
}
.date-box {
    display: flex;
    align-items: center;
    height: 32px;
    padding: 0 13px 0 12px;
    border: 1px solid #ced2da;
    border-radius: 4px;
}
.date-box input {
    flex: 1;
    padding: 0 0 2px;
    border: 0;
    font-size: 12px;
}
.date-box input::placeholder {
    color: #70777e;
}
.date-box button {
    display: flex;
    padding: 0;
    border: 0;
    background: none;
    color: #333;
}
.date-box svg {
    width: 12px;
    height: 12px;
}
.dropdown {
    position: relative;
    padding-top: 1px;
}
.control.open {
    display: block;
    border-color: #2f7de1;
    outline: none;
    background-image: url("data:image/svg+xml,%3Csvg xmlns='http://www.w3.org/2000/svg' width='8' height='5'%3E%3Cpath d='M0 5h8L4 0z' fill='%23999'/%3E%3C/svg%3E");
}
.options {
    position: absolute;
    top: 32px;
    left: 0;
    right: 0;
    z-index: 1;
    margin: 0;
    padding: 0;
    list-style: none;
    border: 1px solid #ccc;
    border-top-color: #e0e0e0;
    border-radius: 0 0 4px 4px;
    background-color: #fff;
    box-shadow: 0 1px 0 rgba(0, 0, 0, 0.08);
    color: #404040;
}
.options li {
    padding: 6px 9px 7px;
}
.options .hover {
    background-color: #f1f1f1;
}
.modal-field textarea {
    display: block;
    width: 100%;
    height: 93px;
    border: 1px solid #777;
    resize: none;
}
.highlight {
    position: absolute;
    z-index: 2;
    top: 103px;
    bottom: 4px;
    left: 12px;
    right: 9px;
    border: 4px solid #e61e1e;
}
.modal-footer {
    display: flex;
    gap: 21px;
    padding: 29px 43px 29px 15px;
}
.modal-footer .btn {
    flex: 1;
    height: 34px;
}
.modal-footer .btn-cancel {
    border: 1px solid #2d3340;
    background-color: #f8fafc;
    color: #2d3340;
    font-weight: 400;
}
.modal-footer .btn-confirm {
    background-color: #7aabed;
    font-weight: 700;
}
```
